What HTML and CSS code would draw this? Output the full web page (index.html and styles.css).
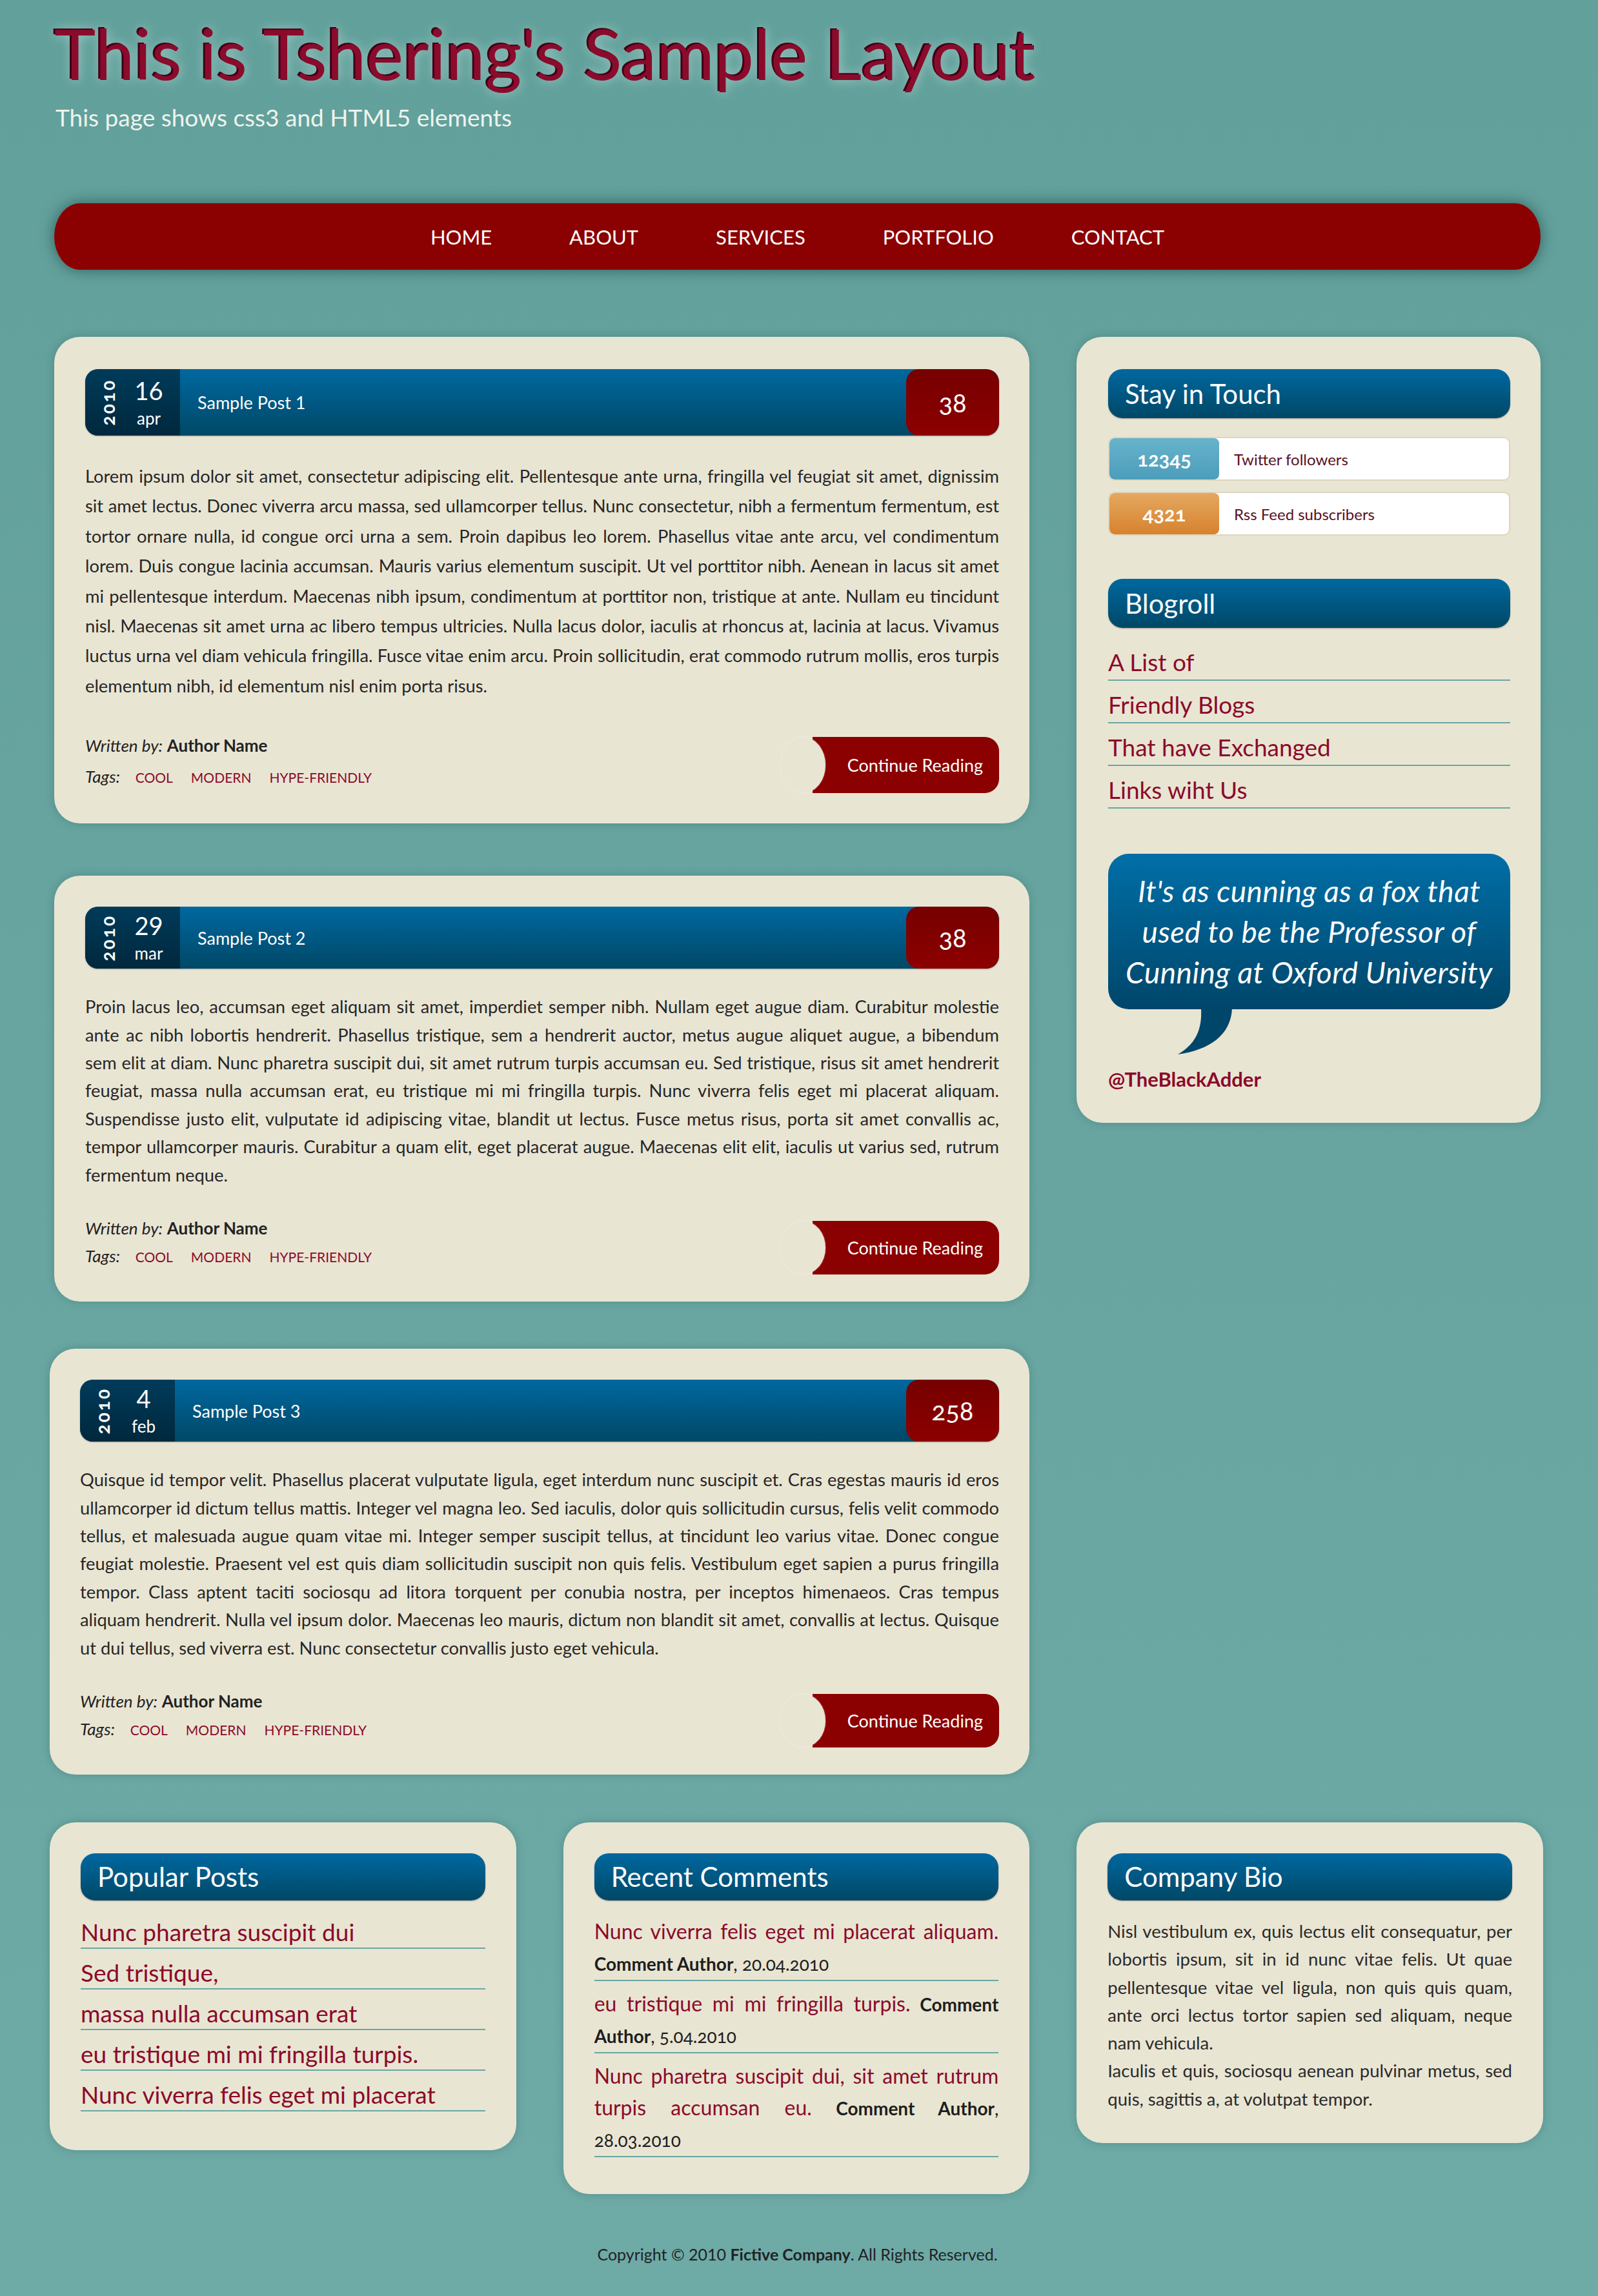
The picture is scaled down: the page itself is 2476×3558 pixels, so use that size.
FILE: index.html
```html
<!DOCTYPE html>
<html lang="en">
<head>
<meta charset="utf-8">
<title>This is Tshering's Sample Layout</title>
<link rel="stylesheet" href="styles.css">
</head>
<body>
<div class="page">
  <header class="site-header">
    <h1 class="site-title">This is Tshering's Sample Layout</h1>
    <p class="site-tagline">This page shows css3 and HTML5 elements</p>
  </header>

  <nav class="main-nav">
    <ul class="main-nav__list">
      <li><a href="#">HOME</a></li>
      <li><a href="#">ABOUT</a></li>
      <li><a href="#">SERVICES</a></li>
      <li><a href="#">PORTFOLIO</a></li>
      <li><a href="#">CONTACT</a></li>
    </ul>
  </nav>

  <div class="layout">
    <main class="posts">
      <article class="card post post--lead">
        <header class="post-head">
          <div class="post-date">
            <span class="post-year">2010</span>
            <span class="post-dm"><span class="post-day">16</span><span class="post-month">apr</span></span>
          </div>
          <h2 class="post-title">Sample Post 1</h2>
          <a class="post-count" href="#">38</a>
        </header>
        <p class="post-text">Lorem ipsum dolor sit amet, consectetur adipiscing elit. Pellentesque ante urna, fringilla vel feugiat sit amet, dignissim sit amet lectus. Donec viverra arcu massa, sed ullamcorper tellus. Nunc consectetur, nibh a fermentum fermentum, est tortor ornare nulla, id congue orci urna a sem. Proin dapibus leo lorem. Phasellus vitae ante arcu, vel condimentum lorem. Duis congue lacinia accumsan. Mauris varius elementum suscipit. Ut vel porttitor nibh. Aenean in lacus sit amet mi pellentesque interdum. Maecenas nibh ipsum, condimentum at porttitor non, tristique at ante. Nullam eu tincidunt nisl. Maecenas sit amet urna ac libero tempus ultricies. Nulla lacus dolor, iaculis at rhoncus at, lacinia at lacus. Vivamus luctus urna vel diam vehicula fringilla. Fusce vitae enim arcu. Proin sollicitudin, erat commodo rutrum mollis, eros turpis elementum nibh, id elementum nisl enim porta risus.</p>
        <footer class="post-foot">
          <div class="post-meta">
            <p class="post-author"><em>Written by:</em> <strong>Author Name</strong></p>
            <p class="post-tags"><em>Tags:</em> <a class="tag" href="#">COOL</a><a class="tag" href="#">MODERN</a><a class="tag" href="#">HYPE-FRIENDLY</a></p>
          </div>
          <a class="more-btn" href="#">Continue Reading</a>
        </footer>
      </article>

      <article class="card post">
        <header class="post-head">
          <div class="post-date">
            <span class="post-year">2010</span>
            <span class="post-dm"><span class="post-day">29</span><span class="post-month">mar</span></span>
          </div>
          <h2 class="post-title">Sample Post 2</h2>
          <a class="post-count" href="#">38</a>
        </header>
        <p class="post-text">Proin lacus leo, accumsan eget aliquam sit amet, imperdiet semper nibh. Nullam eget augue diam. Curabitur molestie ante ac nibh lobortis hendrerit. Phasellus tristique, sem a hendrerit auctor, metus augue aliquet augue, a bibendum sem elit at diam. Nunc pharetra suscipit dui, sit amet rutrum turpis accumsan eu. Sed tristique, risus sit amet hendrerit feugiat, massa nulla accumsan erat, eu tristique mi mi fringilla turpis. Nunc viverra felis eget mi placerat aliquam. Suspendisse justo elit, vulputate id adipiscing vitae, blandit ut lectus. Fusce metus risus, porta sit amet convallis ac, tempor ullamcorper mauris. Curabitur a quam elit, eget placerat augue. Maecenas elit elit, iaculis ut varius sed, rutrum fermentum neque.</p>
        <footer class="post-foot">
          <div class="post-meta">
            <p class="post-author"><em>Written by:</em> <strong>Author Name</strong></p>
            <p class="post-tags"><em>Tags:</em> <a class="tag" href="#">COOL</a><a class="tag" href="#">MODERN</a><a class="tag" href="#">HYPE-FRIENDLY</a></p>
          </div>
          <a class="more-btn" href="#">Continue Reading</a>
        </footer>
      </article>

      <article class="card post post--wide">
        <header class="post-head">
          <div class="post-date">
            <span class="post-year">2010</span>
            <span class="post-dm"><span class="post-day">4</span><span class="post-month">feb</span></span>
          </div>
          <h2 class="post-title">Sample Post 3</h2>
          <a class="post-count" href="#">258</a>
        </header>
        <p class="post-text">Quisque id tempor velit. Phasellus placerat vulputate ligula, eget interdum nunc suscipit et. Cras egestas mauris id eros ullamcorper id dictum tellus mattis. Integer vel magna leo. Sed iaculis, dolor quis sollicitudin cursus, felis velit commodo tellus, et malesuada augue quam vitae mi. Integer semper suscipit tellus, at tincidunt leo varius vitae. Donec congue feugiat molestie. Praesent vel est quis diam sollicitudin suscipit non quis felis. Vestibulum eget sapien a purus fringilla tempor. Class aptent taciti sociosqu ad litora torquent per conubia nostra, per inceptos himenaeos. Cras tempus aliquam hendrerit. Nulla vel ipsum dolor. Maecenas leo mauris, dictum non blandit sit amet, convallis at lectus. Quisque ut dui tellus, sed viverra est. Nunc consectetur convallis justo eget vehicula.</p>
        <footer class="post-foot">
          <div class="post-meta">
            <p class="post-author"><em>Written by:</em> <strong>Author Name</strong></p>
            <p class="post-tags"><em>Tags:</em> <a class="tag" href="#">COOL</a><a class="tag" href="#">MODERN</a><a class="tag" href="#">HYPE-FRIENDLY</a></p>
          </div>
          <a class="more-btn" href="#">Continue Reading</a>
        </footer>
      </article>
    </main>

    <aside class="card sidebar">
      <h3 class="widget-title">Stay in Touch</h3>
      <ul class="stats">
        <li class="stat"><span class="stat-num stat-num--twitter">12345</span><span class="stat-label">Twitter followers</span></li>
        <li class="stat"><span class="stat-num stat-num--rss">4321</span><span class="stat-label">Rss Feed subscribers</span></li>
      </ul>

      <h3 class="widget-title widget-title--spaced">Blogroll</h3>
      <ul class="link-list link-list--blogroll">
        <li><a href="#">A List of</a></li>
        <li><a href="#">Friendly Blogs</a></li>
        <li><a href="#">That have Exchanged</a></li>
        <li><a href="#">Links wiht Us</a></li>
      </ul>

      <blockquote class="quote">
        It's as cunning as a fox that used to be the Professor of Cunning at Oxford University
        <svg class="quote-tail" width="100" height="75" viewBox="0 0 100 75" aria-hidden="true"><path d="M46 0 C48 34 36 56 10 71 C58 64 92 42 94 0 Z" fill="#00466a"/></svg>
      </blockquote>
      <p class="quote-handle"><a href="#">@TheBlackAdder</a></p>
    </aside>
  </div>

  <div class="bottom">
    <section class="card box">
      <h3 class="widget-title widget-title--small">Popular Posts</h3>
      <ul class="link-list link-list--popular">
        <li><a href="#">Nunc pharetra suscipit dui</a></li>
        <li><a href="#">Sed tristique,</a></li>
        <li><a href="#">massa nulla accumsan erat</a></li>
        <li><a href="#">eu tristique mi mi fringilla turpis.</a></li>
        <li><a href="#">Nunc viverra felis eget mi placerat</a></li>
      </ul>
    </section>

    <section class="card box box--comments">
      <h3 class="widget-title widget-title--small">Recent Comments</h3>
      <ul class="comments">
        <li><a href="#">Nunc viverra felis eget mi placerat aliquam.</a> <strong>Comment Author</strong>, <span class="comment-date">20.04.2010</span></li>
        <li><a href="#">eu tristique mi mi fringilla turpis.</a> <strong>Comment Author</strong>, <span class="comment-date">5.04.2010</span></li>
        <li><a href="#">Nunc pharetra suscipit dui, sit amet rutrum turpis accumsan eu.</a> <strong>Comment Author</strong>, <span class="comment-date">28.03.2010</span></li>
      </ul>
    </section>

    <section class="card box box--bio">
      <h3 class="widget-title widget-title--small">Company Bio</h3>
      <p class="bio-text">Nisl vestibulum ex, quis lectus elit consequatur, per lobortis ipsum, sit in id nunc vitae felis. Ut quae pellentesque vitae vel ligula, non quis quis quam, ante orci lectus tortor sapien sed aliquam, neque nam vehicula.<br>Iaculis et quis, sociosqu aenean pulvinar metus, sed quis, sagittis a, at volutpat tempor.</p>
    </section>
  </div>

  <footer class="site-footer">
    <p>Copyright © 2010 <strong>Fictive Company</strong>. All Rights Reserved.</p>
  </footer>
</div>
</body>
</html>
```

FILE: styles.css
```css
* {
  box-sizing: border-box;
}

html {
  min-height: 100%;
  background: linear-gradient(#62a09b, #6eaaa6) no-repeat;
  background-color: #6eaaa6;
}

body {
  margin: 0;
  font-family: Lato, "Open Sans", sans-serif;
  color: #262626;
}

a {
  text-decoration: none;
}

ul {
  list-style: none;
  margin: 0;
  padding: 0;
}

.page {
  width: 2303px;
  margin-left: 84px;
  padding-top: 16px;
}

/* ---------- header ---------- */
.site-title {
  margin: 0;
  font-size: 109px;
  line-height: 132px;
  font-weight: 400;
  color: #8b0b2d;
  text-shadow: -3px -2px 0 #3f0014, 0 0 18px rgba(225, 245, 240, 0.55);
}

.site-tagline {
  margin: 12px 0 0 2px;
  font-size: 37px;
  line-height: 43px;
  color: #eef3ee;
}

/* ---------- nav ---------- */
.main-nav {
  margin-top: 112px;
  height: 103px;
  background: #8b0000;
  border-radius: 40px / 50%;
  box-shadow: 0 0 22px rgba(0, 40, 40, 0.55);
  display: flex;
  align-items: center;
  justify-content: center;
}

.main-nav__list {
  display: flex;
  gap: 120px;
}

.main-nav__list a {
  color: #fff;
  font-size: 31px;
  line-height: 40px;
}

/* ---------- layout ---------- */
.layout {
  display: grid;
  grid-template-columns: 1511px 719px;
  column-gap: 73px;
  margin-top: 104px;
  align-items: start;
}

.posts {
  display: flex;
  flex-direction: column;
  gap: 73px;
}

.card {
  background: #e9e5d3;
  border-radius: 40px;
  box-shadow: 0 0 14px rgba(0, 60, 60, 0.22);
}

/* ---------- posts ---------- */
.post {
  padding: 48px 47px 42px 48px;
}

.post--lead {
  padding: 50px 47px 47px 48px;
  margin-bottom: 8px;
}

.post--wide {
  margin-left: -7px;
  padding-left: 47px;
}

.post-head {
  display: flex;
  height: 96px;
  border-radius: 20px;
  overflow: hidden;
  background: linear-gradient(#0068a0, #004866);
  box-shadow: 0 1px 2px rgba(0, 0, 0, 0.3);
}

.post--lead .post-head {
  height: 103px;
}

.post-date {
  width: 147px;
  flex: none;
  display: flex;
  align-items: center;
  padding-left: 20px;
  gap: 12px;
  color: #fff;
  background: linear-gradient(#003b5a, #00283d);
}

.post-year {
  writing-mode: vertical-rl;
  transform: rotate(180deg);
  font-size: 28px;
  line-height: 30px;
  font-weight: 700;
  letter-spacing: 3px;
  font-variant-numeric: oldstyle-nums;
}

.post-dm {
  flex: 1;
  display: flex;
  flex-direction: column;
  align-items: center;
  gap: 10px;
  padding-right: 12px;
}

.post-day {
  font-size: 38px;
  line-height: 38px;
}

.post-month {
  font-size: 26px;
  line-height: 28px;
}

.post-title {
  flex: 1;
  align-self: center;
  margin: 0 0 0 27px;
  font-size: 27px;
  font-weight: 400;
  color: #fff;
}

.post-count {
  width: 144px;
  flex: none;
  display: flex;
  align-items: center;
  justify-content: center;
  border-radius: 20px;
  background: linear-gradient(#760000, #8d0000);
  color: #fff;
  font-size: 40px;
  font-variant-numeric: oldstyle-nums;
}

.post-text {
  margin: 37px 0 0;
  font-size: 27.3px;
  line-height: 43.4px;
  text-align: justify;
  color: #262626;
}

.post--lead .post-text {
  margin-top: 40px;
  line-height: 46.4px;
}

.post-foot {
  display: flex;
  justify-content: space-between;
  align-items: flex-start;
  margin-top: 40px;
}

.post--lead .post-foot {
  margin-top: 45px;
}

.post-meta p {
  margin: 0;
  font-size: 26px;
  line-height: 43px;
  color: #222;
}

.post--lead .post-meta p {
  line-height: 48px;
}

.post-author strong {
  font-weight: 700;
  font-size: 26px;
}

.tag {
  margin-left: 17px;
  font-size: 21px;
  color: #8b0a2a;
}

.tag + .tag {
  margin-left: 28px;
}

.more-btn {
  position: relative;
  display: flex;
  align-items: center;
  height: 83px;
  margin-top: 10px;
  padding: 0 25px 0 54px;
  background: #8b0000;
  border-radius: 0 22px 22px 0;
  color: #fff;
  font-size: 27px;
}

.post--lead .more-btn {
  height: 87px;
  margin-top: 11px;
}

.more-btn::before {
  content: "";
  position: absolute;
  left: -50px;
  top: 0;
  bottom: 0;
  width: 70px;
  border-radius: 50%;
  background: #e9e5d3;
  box-shadow: 0 0 2px rgba(255, 255, 255, 0.7);
}

/* ---------- sidebar ---------- */
.sidebar {
  padding: 50px 47px 48px 49px;
}

.widget-title {
  display: flex;
  align-items: center;
  height: 76px;
  margin: 0;
  padding-left: 26px;
  border-radius: 22px;
  background: linear-gradient(#0068a0, #004866);
  box-shadow: 0 1px 2px rgba(40, 0, 40, 0.35);
  color: #fff;
  font-size: 42px;
  font-weight: 400;
}

.widget-title--spaced {
  margin-top: 67px;
}

.widget-title--small {
  height: 73px;
}

.stats {
  margin-top: 29px;
  display: flex;
  flex-direction: column;
  gap: 17px;
}

.stat {
  display: flex;
  align-items: stretch;
  height: 68px;
  background: #fff;
  border: 2px solid #ddd6bf;
  border-radius: 10px;
  overflow: hidden;
}

.stat-num {
  width: 170px;
  flex: none;
  display: flex;
  align-items: center;
  justify-content: center;
  border-radius: 8px;
  color: #fff;
  font-size: 31px;
  font-weight: 700;
  font-variant-numeric: oldstyle-nums;
}

.stat-num--twitter {
  background: linear-gradient(#67b3cb, #4c9dbb);
}

.stat-num--rss {
  background: linear-gradient(#e4a860, #d7822d);
}

.stat-label {
  align-self: center;
  padding-left: 23px;
  font-size: 24px;
  color: #5a1020;
}

.link-list a {
  color: #8b0a2a;
}

.link-list--blogroll {
  margin-top: 16px;
}

.link-list--blogroll li {
  padding: 15px 0 5px;
  font-size: 37px;
  line-height: 44px;
  border-bottom: 2px solid #6aa6a2;
}

.quote {
  position: relative;
  margin: 70px 0 0;
  padding: 26px 8px;
  border-radius: 32px;
  background: linear-gradient(#006fa7, #00466a);
  color: #fff;
  font-size: 46px;
  line-height: 63px;
  letter-spacing: 0.5px;
  font-style: italic;
  text-align: center;
}

.quote-tail {
  position: absolute;
  top: calc(100% - 1px);
  left: 98px;
}

.quote-handle {
  margin: 88px 0 0;
  font-size: 31px;
  line-height: 40px;
  font-weight: 700;
}

.quote-handle a {
  color: #8b0a2a;
}

/* ---------- bottom boxes ---------- */
.bottom {
  display: grid;
  grid-template-columns: repeat(3, 1fr);
  column-gap: 73px;
  margin: 74px -4px 0 -7px;
  align-items: start;
}

.box {
  padding: 48px 48px 60px 48px;
}

.link-list--popular {
  margin-top: 12px;
}

.link-list--popular li {
  padding: 14px 0 1px;
  font-size: 37px;
  line-height: 46px;
  border-bottom: 2px solid #6aa6a2;
}

.box--comments {
  padding-bottom: 57px;
}

.comments {
  margin-top: 13px;
}

.comments li {
  padding-top: 12px;
  line-height: 49px;
  text-align: justify;
  border-bottom: 2px solid #6aa6a2;
  font-size: 28px;
  color: #1e1e1e;
}

.comments a {
  font-size: 32px;
  line-height: 32px;
  color: #8b0a2a;
}

.comments strong {
  font-weight: 700;
  line-height: 28px;
}

.comment-date {
  line-height: 28px;
  font-variant-numeric: oldstyle-nums;
}

.box--bio {
  padding-bottom: 47px;
}

.bio-text {
  margin: 26px 0 0;
  font-size: 27.5px;
  line-height: 43.3px;
  text-align: justify;
  color: #2a2a2a;
}

/* ---------- footer ---------- */
.site-footer {
  margin-top: 73px;
  text-align: center;
}

.site-footer p {
  margin: 0;
  font-size: 25px;
  line-height: 40px;
  color: #222;
}

.site-footer strong {
  font-weight: 700;
}
```
